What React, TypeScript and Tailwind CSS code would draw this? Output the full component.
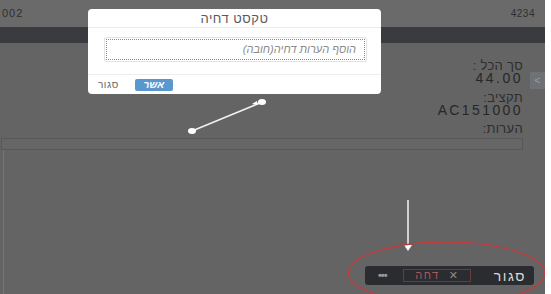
import React from "react";

const font = { fontFamily: '"Liberation Sans", "DejaVu Sans", "Noto Sans", sans-serif' };

export default function App() {
  return (
    <div className="w-[551px] h-[294px] flex bg-white overflow-hidden" style={font}>
      <div className="relative w-[545px] h-full flex flex-col bg-[#646464]">
        {/* top row */}
        <div className="h-[27px] flex items-center justify-between pl-[2px] pr-[10px] bg-[#6a6a6a] text-[#2f2f2f]">
          <span className="text-[11px] tracking-[1px]">002</span>
          <span className="text-[10px] tracking-[0.5px]">4234</span>
        </div>
        {/* dark bar */}
        <div className="h-[16px] bg-[#393b3e]" />
        {/* body */}
        <div className="flex-1 flex flex-col">
          <div dir="rtl" className="flex flex-col items-start pr-[22px] pt-[16px] text-[#2e2e2e]">
            <div className="leading-[13px] text-[13px] tracking-[0.3px]">סך הכל :</div>
            <div className="leading-[13px] text-[14px] tracking-[2.5px] text-[#272727]">44.00</div>
            <div className="leading-[13px] text-[13px] tracking-[0.3px] mt-[6px]">תקציב:</div>
            <div className="leading-[13px] text-[14px] tracking-[2.4px] text-[#272727]">AC151000</div>
            <div className="leading-[13px] text-[13px] tracking-[0.3px] mt-[5px]">הערות:</div>
            <div className="w-[522px] h-[12px] mt-[3px] border border-[#585858] bg-[#666666]" />
          </div>
          <div className="flex-1 ml-[3px] border-l border-[#757575] flex flex-col">
            <div className="mt-auto flex justify-end pr-[11px] pb-[9px]">
              <div className="w-[169px] h-[19px] rounded-[3px] bg-[#2a2c2f] flex items-center pl-[13px] pr-[8px]">
                <span className="text-[#9a9a9a] text-[11px] leading-none tracking-[-1px] font-bold">•••</span>
                <div className="ml-[16px] w-[68px] h-[13px] border border-[#6b3a3d] flex items-center justify-center gap-[9px] text-[11px] leading-none">
                  <span className="text-[#a85a5e] tracking-[1.5px]">דחה</span>
                  <span className="text-[#8a8a8a]">✕</span>
                </div>
                <span className="ml-auto text-[#d8d8d8] text-[14px] leading-none tracking-[1.5px]">סגור</span>
              </div>
            </div>
          </div>
        </div>

        {/* side tab */}
        <div className="absolute left-[530px] top-[72px] w-[15px] h-[17px] bg-[#6e7175] flex items-center justify-center text-[#9c9c9c] text-[11px]">
          &lt;
        </div>

        {/* dialog */}
        <div className="absolute left-[88px] top-[9px] w-[293px] h-[85px] bg-white rounded-[4px] flex flex-col">
          <div className="h-[19px] pt-[1px] flex items-center justify-center border-b border-[#ebebeb] text-[#5a5a5a] text-[13px] tracking-[0.5px]" dir="rtl">
            טקסט דחיה
          </div>
          <div className="h-[47px] pt-[9px] pl-[16px] pr-[14px] border-b border-[#eeeeee]">
            <div className="h-[25px] border border-[#e2e2e2] rounded-[2px] p-[1px]">
              <div dir="rtl" className="h-full border border-dotted border-[#8c8c8c] pr-[8px] pt-[3px] text-[11px] italic text-[#8a8a8a] leading-[12px]">
                הוסף הערות דחיה(חובה)
              </div>
            </div>
          </div>
          <div className="flex-1 flex items-center pl-[10px]">
            <span className="text-[#666] text-[10px] tracking-[0.5px]">סגור</span>
            <div className="ml-[16px] w-[38px] h-[12px] rounded-[2px] bg-[#5b97cf] flex items-center justify-center text-white text-[10px] italic font-bold">
              אשר
            </div>
          </div>
        </div>

        {/* annotations */}
        <svg className="absolute left-0 top-0" width="545" height="294" viewBox="0 0 545 294">
          <line x1="192" y1="131" x2="260" y2="103" stroke="#f2f2f2" strokeWidth="1.5" />
          <ellipse cx="192" cy="131" rx="4" ry="3" fill="#fff" />
          <ellipse cx="262" cy="102" rx="4" ry="3" fill="#fff" />
          <polygon points="252,104 257,101 258,105" fill="#fff" />
          <line x1="408" y1="200" x2="408" y2="246" stroke="#f4f4f4" strokeWidth="1.5" />
          <polygon points="404,245 412,245 408,251" fill="#fff" />
          <ellipse cx="446.5" cy="273" rx="98" ry="31" fill="none" stroke="#c23b3b" strokeWidth="1.3" />
        </svg>
      </div>
    </div>
  );
}
